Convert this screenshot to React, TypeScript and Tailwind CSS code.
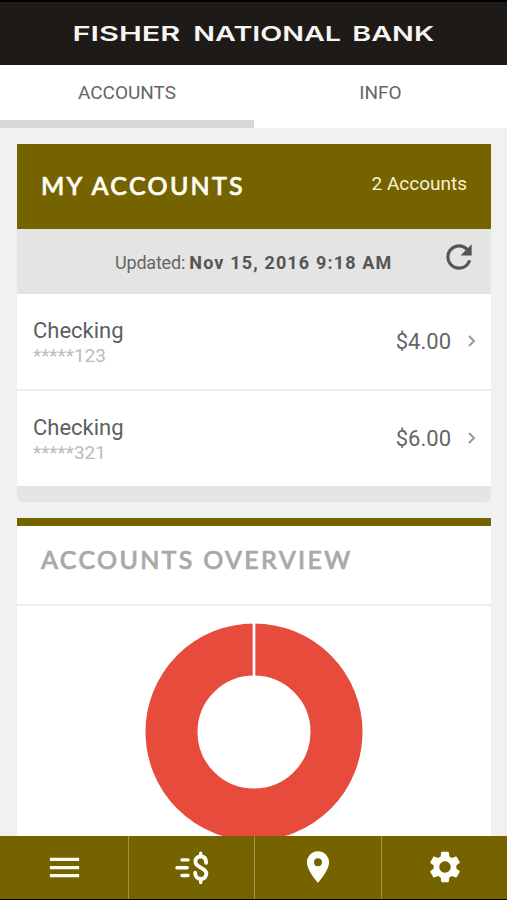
import { MdLocationOn, MdMenu, MdRefresh, MdSettings } from "react-icons/md";

const accounts = [
  { name: "Checking", mask: "*****123", balance: "$4.00" },
  { name: "Checking", mask: "*****321", balance: "$6.00" },
];

function Header() {
  return (
    <header className="h-[65px] shrink-0 border-t-2 border-black bg-[#1e1a17]">
      <svg className="block h-[62px] w-[507px]" viewBox="0 2 507 62" fill="#f7f5f1">
        <g transform="translate(72.5 40.5) scale(1.4 1)" fontFamily="Inter, sans-serif" fontSize="20.5" fontWeight="600">
          <text x="0" y="0" textLength="77" lengthAdjust="spacingAndGlyphs">FISHER</text>
          <text x="86.3" y="0" textLength="105.5" lengthAdjust="spacingAndGlyphs">NATIONAL</text>
          <text x="199.8" y="0" textLength="58.5" lengthAdjust="spacingAndGlyphs">BANK</text>
        </g>
      </svg>
    </header>
  );
}

function Tabs() {
  return (
    <nav className="flex h-[63px] shrink-0 bg-white text-[19px] leading-[22px] text-[#666]">
      <button className="flex w-[254px] flex-col items-center justify-between border-b-8 border-[#d8d8d8] pt-[17px]">
        <span>ACCOUNTS</span>
      </button>
      <button className="flex flex-1 flex-col items-center pt-[17px]">
        <span>INFO</span>
      </button>
    </nav>
  );
}

function AccountsCard() {
  return (
    <section className="h-[358px] shrink-0 overflow-hidden rounded-b-[6px] bg-[#e4e4e4]">
      <div className="flex h-[85px] items-center justify-between bg-[#756300] pr-6 pl-6">
        <h2 className="pb-1 font-[Lato] text-[25px] leading-[30px] font-medium tracking-[2.3px] text-[#fffdf5] [-webkit-text-stroke:0.7px_#fffdf5]">MY ACCOUNTS</h2>
        <span className="pb-[6px] text-[19px] leading-[22px] text-[#f8f1d5]">2 Accounts</span>
      </div>
      <div className="flex h-[65px] items-center bg-[#e4e4e4] pl-[98px] text-[18px] leading-[22px] text-[#666]">
        <p className="w-[290px] pt-[2px] whitespace-nowrap">
          <span className="tracking-[-0.2px]">Updated: </span>
          <b className="tracking-[1.15px] text-[#555]">Nov 15, 2016 9:18 AM</b>
        </p>
        <MdRefresh className="mb-[9px] ml-[35px] size-[38px] shrink-0 text-[#555]" />
      </div>
      <div className="flex flex-col gap-[2px] bg-[#eee]">
        {accounts.map((a) => (
          <div key={a.mask} className="flex h-[95px] items-center bg-white pr-[15px] pl-4">
            <div className="flex-1 pt-[2px]">
              <p className="text-[22px] leading-[26px] text-[#5e5e5e]">{a.name}</p>
              <p className="text-[19px] leading-[24px] text-[#bbb]">{a.mask}</p>
            </div>
            <span className="text-[22px] leading-[26px] text-[#666]">{a.balance}</span>
            <svg className="mb-px ml-[17px] h-3 w-2" viewBox="0 0 8 12" fill="none" stroke="#999" strokeWidth="2">
              <path d="M1 1l5 5-5 5" />
            </svg>
          </div>
        ))}
      </div>
    </section>
  );
}

function OverviewCard() {
  return (
    <section className="mt-4 flex flex-1 flex-col border-t-8 border-[#756300] bg-white">
      <div className="flex h-20 shrink-0 items-center border-b-2 border-[#ededed] pb-[12px] pl-6">
        <h2 className="font-[Lato] text-[25px] leading-[30px] font-medium tracking-[2.3px] text-[#a9a9a9] [-webkit-text-stroke:0.7px_#a9a9a9]">ACCOUNTS OVERVIEW</h2>
      </div>
      <svg className="mx-auto mt-[17px] block h-[213px] w-[218px]" viewBox="0 0 218 213">
        <circle cx="109" cy="109" r="82.5" fill="none" stroke="#e64b3c" strokeWidth="52" />
        <path d="M109 0v54" stroke="#fff" strokeWidth="2.7" />
      </svg>
    </section>
  );
}

function TransferIcon() {
  return (
    <svg className="h-[34px] w-[36px]" viewBox="0.7 0.3 36 34" fill="none" stroke="#fffef8" strokeWidth="3.4" strokeLinecap="round">
      <path d="M8.7 9.2h6M3.7 17h10.2M8.7 24.8h6" />
      <path d="M32.8 12C32.8 8 30.8 5.8 27.4 5.8c-3.3 0-5.3 2.1-5.3 5.1 0 6.7 10.9 5.4 10.9 12 0 3.3-2.2 5.4-5.5 5.4-3.5 0-5.6-2.5-5.6-6.3" strokeWidth="3.9" />
      <path d="M27.4 2.4v3M27.4 29v2.8" />
    </svg>
  );
}

function BottomBar() {
  const cell = "flex items-center justify-center border-r border-[#a0944c] last:border-r-0";
  return (
    <nav className="grid h-16 shrink-0 grid-cols-[129px_126px_127px_125px] border-b border-black bg-[#756300] text-[#fffef8]">
      <button className={cell} aria-label="Menu"><MdMenu className="size-[39px]" /></button>
      <button className={cell} aria-label="Transfer"><TransferIcon /></button>
      <button className={cell} aria-label="Locations"><MdLocationOn className="mb-px size-[38px]" /></button>
      <button className={cell} aria-label="Settings"><MdSettings className="mb-px size-[38px]" /></button>
    </nav>
  );
}

export default function App() {
  return (
    <div className="flex h-[900px] w-[507px] flex-col overflow-hidden bg-[#f1f1f1] font-[Roboto]">
      <Header />
      <Tabs />
      <main className="flex min-h-0 flex-1 flex-col pt-4 pr-4 pl-[17px]">
        <AccountsCard />
        <OverviewCard />
      </main>
      <BottomBar />
    </div>
  );
}
